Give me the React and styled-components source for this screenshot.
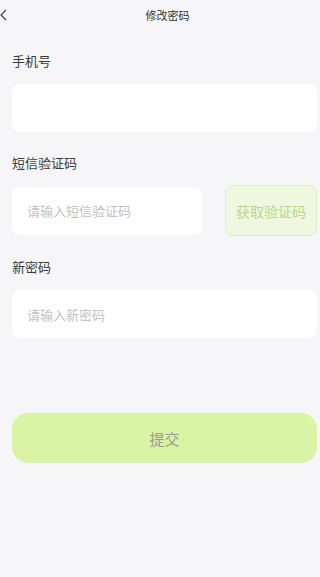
import React from 'react'
import styled, { createGlobalStyle } from 'styled-components'

const Global = createGlobalStyle`
    html, body {
        margin:0;
        padding:0;
        background:#f6f6f8;
        font-family:"Noto Sans CJK SC", "Noto Sans", sans-serif;
    }
    * { box-sizing:border-box; }
`

const App = () => {
    return (
        <Page>
            <Global />
            <NavBar>
                <Back>
                    <svg width="8" height="12" viewBox="0 0 8 12">
                        <path d="M6 1 L1 6 L6 11" fill="none" stroke="#333" strokeWidth="1.1" />
                    </svg>
                </Back>
                <NavTitle>修改密码</NavTitle>
            </NavBar>

            <Form>
                <Field>
                    <Label>手机号</Label>
                    <Input />
                </Field>
                <Field>
                    <Label>短信验证码</Label>
                    <Row>
                        <Input placeholder="请输入短信验证码" />
                        <CodeButton>获取验证码</CodeButton>
                    </Row>
                </Field>
                <Field>
                    <Label>新密码</Label>
                    <Input placeholder="请输入新密码" type="password" />
                </Field>
            </Form>

            <Submit>提交</Submit>
        </Page>
    )
}

const Page = styled.div`
    min-height:577px;
    background:#f6f6f8;
    padding:0 3px 0 12px;
`

const NavBar = styled.div`
    position:relative;
    height:30px;
    display:flex;
    align-items:center;
    justify-content:center;
`

const Back = styled.div`
    position:absolute;
    left:-12px;
    top:9px;
    display:flex;
`

const NavTitle = styled.div`
    font-size:11px;
    color:#333;
    padding-left:6px;
`

const Form = styled.div`
    display:flex;
    flex-direction:column;
    gap:22px;
    padding-top:22px;
`

const Field = styled.div`
    display:flex;
    flex-direction:column;
    gap:14px;
`

const Label = styled.div`
    font-size:13px;
    line-height:18px;
    color:#3a3a3a;
`

const Row = styled.div`
    display:flex;
    align-items:center;
    gap:23px;
    margin-top:-1px;
`

const Input = styled.input`
    width:100%;
    min-width:0;
    flex-shrink:1;
    height:48px;
    border:none;
    outline:none;
    border-radius:8px;
    background:#fff;
    padding:0 15px;
    font-size:13px;
    font-family:inherit;
    color:#333;
    &::placeholder { color:#c2c2c2; }
`

const CodeButton = styled.button`
    flex-shrink:0;
    width:92px;
    height:51px;
    border:1px solid #dcf2bb;
    border-radius:8px;
    background:#eff7e1;
    color:#b6d98a;
    font-size:14px;
    font-family:inherit;
    padding:0;
`

const Submit = styled.button`
    display:block;
    width:100%;
    height:50px;
    margin-top:75px;
    border:none;
    border-radius:16px;
    background:#d8f4a4;
    color:#999;
    font-size:15px;
    font-family:inherit;
`

export default App
